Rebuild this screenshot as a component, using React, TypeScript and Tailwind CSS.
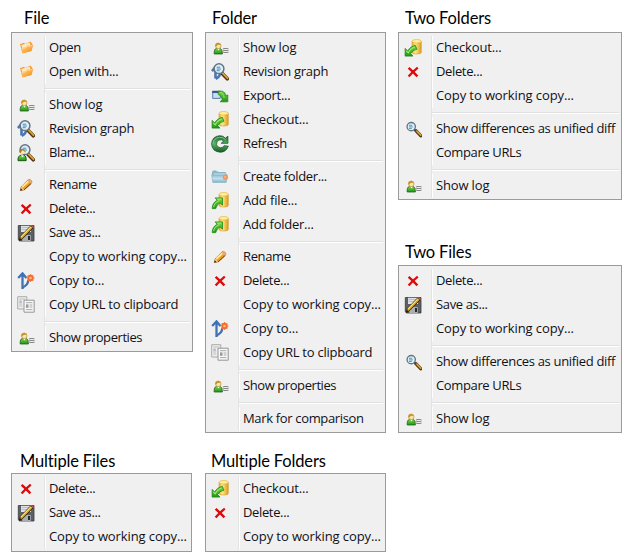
import React from "react";

type IconName =
  | "open" | "user" | "graph" | "blame" | "rename" | "delete" | "save" | "copy"
  | "clipboard" | "export" | "checkout" | "refresh" | "create" | "add" | "diff";

type Item = { label: string; icon?: IconName; spacing?: string };
type Entry = Item | { gap: 8 | 9 };

function Gradients() {
  return (
    <svg width="0" height="0" className="absolute" aria-hidden="true">
      <defs>
        <linearGradient id="orange" x1="0" y1="0" x2="1" y2="1">
          <stop offset="0" stopColor="#ffd68f" /><stop offset="0.5" stopColor="#fcae45" /><stop offset="1" stopColor="#ee861a" />
        </linearGradient>
        <linearGradient id="gold" x1="0" y1="0" x2="1" y2="0">
          <stop offset="0" stopColor="#e3a62a" /><stop offset="0.35" stopColor="#ffec86" /><stop offset="1" stopColor="#dc9a1c" />
        </linearGradient>
        <linearGradient id="green" x1="0" y1="0" x2="0" y2="1">
          <stop offset="0" stopColor="#7ad650" /><stop offset="1" stopColor="#1f9416" />
        </linearGradient>
        <linearGradient id="dark" x1="0" y1="0" x2="0" y2="1">
          <stop offset="0" stopColor="#1f6b32" /><stop offset="0.5" stopColor="#5bb265" /><stop offset="1" stopColor="#145a22" />
        </linearGradient>
        <linearGradient id="sky" x1="0" y1="0" x2="0" y2="1">
          <stop offset="0" stopColor="#8dbdd3" /><stop offset="0.5" stopColor="#c3dfeb" /><stop offset="1" stopColor="#82b4cc" />
        </linearGradient>
      </defs>
    </svg>
  );
}

function Lens({ small = false }: { small?: boolean }) {
  return (
    <g transform={small ? "translate(2 1.5) scale(.9)" : ""}>
      <path d="M11 10.2 L16.3 15.8" stroke="#4d3212" strokeWidth="3.6" strokeLinecap="round" />
      <path d="M11.8 10.4 L16.4 15.2" stroke="#dda034" strokeWidth="1.9" strokeLinecap="round" />
      <circle cx={small ? 5.8 : 8} cy="5.7" r={small ? 4.6 : 4.9} fill="#dff0f9" stroke="#66747e" strokeWidth="1.5" />
      {small && <path d="M9 9 L11.5 11" stroke="#444b50" strokeWidth="1.8" />}
      <path d="M4.8 4.2h3.5M4.8 6h4.2M4.8 7.7h3" transform={small ? "translate(-1.4 0)" : "translate(.9 0)"} stroke="#438bb8" strokeWidth="1" />
    </g>
  );
}

function Cylinder() {
  return (
    <g>
      <path d="M8 2.3v11.2c0 2 9.3 2 9.3 0v-11.2" fill="url(#gold)" stroke="#d99b31" strokeWidth=".6" />
      <ellipse cx="12.65" cy="2.3" rx="4.6" ry="1.8" fill="#fff09a" stroke="#e0aa32" strokeWidth=".6" />
    </g>
  );
}

function Icon({ name }: { name: IconName }) {
  const art: Record<IconName, React.ReactNode> = {
    open: (
      <g>
        <path d="M3 5 L7 3.8 L8.2 5 L13.5 2.4 L15.6 5.3 L14.4 12 L5.3 14 Z" fill="#f6a03a" />
        <path d="M4.4 6 L12.7 3.8 L13.5 7 L5.3 9.2 Z" fill="#ffeac4" />
        <path d="M4.3 9.1 L8.5 8.2 L10 6.6 L16.3 6 L14.5 12 L5.6 14.4 Z" fill="url(#orange)" />
        <path d="M4.9 9.5L8.8 8.7L10.3 7.2L15.6 6.7" fill="none" stroke="#ffe3b0" strokeWidth=".7" />
      </g>
    ),
    user: (
      <g>
        <path d="M3.2 15 Q2.8 10 5.6 9.3 L9.2 9.3 Q11.6 10.4 11.4 15 Z" fill="url(#green)" stroke="#25601a" strokeWidth=".8" />
        <path d="M6 9.3 L8.8 9.3 L7.6 11.4Z" fill="#fff" />
        <circle cx="7.3" cy="6.9" r="2.7" fill="#ffe5a4" stroke="#c08c30" strokeWidth=".7" />
        <path d="M4.2 7.4 Q3.9 3.7 7.3 3.8 Q9.7 3.9 10.1 6.2 Q7.4 5 5.4 7.2Z" fill="#c8952f" />
        <path d="M12 9.5h5.2M12 11.5h5.2M12 13.5h5.2" stroke="#858585" strokeWidth="1.1" />
        <path d="M12.3 9v5M17 9v5" stroke="#b5b5b5" strokeWidth=".8" />
      </g>
    ),
    graph: (
      <g>
        <path d="M4.5 15.5V4.5M1 8.2L4.5 4L7 8M4.7 15.8Q9.3 13.5 9.6 9" stroke="#4876b4" strokeWidth="2.6" fill="none" />
        <Lens />
      </g>
    ),
    blame: (
      <g>
        <Lens />
        <path d="M1 16.7Q.6 11.7 4 11.2H7.3Q9.6 12.2 9.2 16.7Z" fill="url(#green)" stroke="#174c13" strokeWidth=".9" />
        <path d="M3.8 11.2h3L5.8 13.5Z" fill="#fff" />
        <circle cx="5.2" cy="8.2" r="2.4" fill="#ffe4a2" />
        <path d="M2.3 8.2Q2.3 4.4 5.5 4.9Q7.8 5.2 8 7.3L5.2 6.3L3.4 9.2Z" fill="#a77726" />
      </g>
    ),
    rename: (
      <g>
        <path d="M3.3 14.5L4.2 10.7L11 3.9Q12.9 2.9 14.7 5Q15.2 6.6 13.8 7.9L7.2 13.9Z" fill="#ea9b22" stroke="#a0601c" strokeWidth=".7" />
        <path d="M5.2 10.9L11.7 4.9" stroke="#ffe695" strokeWidth="2" />
        <path d="M11 3.9Q12.9 2.9 14.7 5Q15.2 6.6 13.8 7.9L10.8 4.9Z" fill="#eea878" />
        <path d="M3.3 14.5L4.2 10.9L7 13.8Z" fill="#f7dcae" />
        <path d="M3.1 14.7L3.8 12.2L5.7 14Z" fill="#292522" />
        <path d="M7 13.9L13.9 7.7" stroke="#64421a" strokeWidth=".9" />
      </g>
    ),
    delete: (
      <g fill="none" stroke="#dc0c0c">
        <path d="M4.6 4.9Q8.6 8.4 13.4 13.3" strokeWidth="2.5" />
        <path d="M13.8 4.6Q9 8.4 4.6 13.5" strokeWidth="2.3" />
      </g>
    ),
    save: (
      <g>
        <path d="M1.3 1.5H17V17H2.7L1.3 15.7Z" fill="#5c6066" stroke="#373a3e" strokeWidth=".8" />
        <path d="M4 1.8H14V8H4Z" fill="#dfe2e4" />
        <path d="M4.5 3.5H13M4.5 5.5H12" stroke="#aeb4ba" strokeWidth=".7" />
        <path d="M5.2 11H13.8V17H5.2Z" fill="#a9aeb3" />
        <path d="M11 12H13V16H11Z" fill="#272a2e" />
        <path d="M2.2 16.6L3.1 12.8L13.8 1.8L16 3.9L5.4 14.8Z" fill="#cc9a20" stroke="#392e18" strokeWidth="1" />
        <path d="M4 13L14 2.9" stroke="#ffe471" strokeWidth="1.2" />
        <path d="M13.8 1.8L14.6 .9L17 3.1L16 3.9Z" fill="#d95641" />
        <path d="M2.2 16.6L2.8 14L4.7 15.5Z" fill="#201b13" />
      </g>
    ),
    copy: (
      <g fill="none">
        <path d="M5.5 17V2M1.2 6L5.5 1.4L9.4 6" stroke="#3f73b5" strokeWidth="2.3" />
        <path d="M5.6 15.5Q11.2 12.8 11.3 8" stroke="#3f73b5" strokeWidth="2.3" />
        <circle cx="13.5" cy="6" r="2.3" fill="#ffc271" stroke="#f46c33" strokeWidth="2" />
        <path d="M13.5 2v1M13.5 9v1M9.4 6h1M16.6 6h1M10.8 3.2l.8.8M15.5 8l.8.8M16.2 3.2l-.8.8M10.7 8.8l.8-.8" stroke="#f57c49" strokeWidth="1.1" />
      </g>
    ),
    clipboard: (
      <g>
        <path d="M.7.7H9.8V13H.7Z" fill="#eee" stroke="#aaa" />
        <path d="M2.2 3h6M2.2 8h3M2.2 10h3" stroke="#b8b8b8" strokeWidth=".9" />
        <path d="M2.3 4.5H4.8V7H2.3Z" fill="#bbb" />
        <path d="M7 4.2H17.2V16.2H7Z" fill="#f7f7f7" stroke="#969696" />
        <path d="M9 6.7H15.4M12.6 9H15.4M12.6 11H15.4M9 13.6H15.4" stroke="#aaa" />
        <path d="M9 8.4H11.5V11.8H9Z" fill="#999" />
      </g>
    ),
    export: (
      <g>
        <path d="M1.7 4.3H9.3V11.4H1.7Z" fill="#c9ddeb" stroke="#5b7fa8" />
        <path d="M1.3 3.9H9.7V6H1.3Z" fill="#335797" />
        <path d="M7.2 4.2H11.2Q14.6 5.2 14.6 8.6L16.8 8V14.8H9.2L11.2 12.6Q11 8.3 7.2 7.4Z" fill="url(#green)" stroke="#26851a" strokeWidth=".8" />
        <path d="M9 5.4Q12.6 6 13.2 11" fill="none" stroke="#9be565" strokeWidth=".9" />
      </g>
    ),
    checkout: (
      <g>
        <Cylinder />
        <path d="M1.1 9.4V17.1H8.9L6.7 14.5Q8.5 11 12.9 10.3L11.3 6.2Q6 7.6 3.6 11.8Z" fill="url(#green)" stroke="#218a18" strokeWidth=".8" />
        <path d="M2.3 12L4.3 13.9Q6 9.8 10.7 8" stroke="#9aec6c" strokeWidth="1.1" fill="none" />
      </g>
    ),
    refresh: (
      <g>
        <path d="M16.9 1.2V8.3H10.2L12.7 6.1Q10.6 3.9 7.9 5.1Q5.2 6.4 5.5 9.5Q6.2 12.7 9.6 12.8Q12 12.8 13.1 10.7L17.3 11.2Q15.2 17.2 9.2 17.2Q1 16.6 .6 9Q1 1.3 8.8 .7Q12.3 .6 14.4 3.2Z" fill="url(#dark)" stroke="#1b5b2b" strokeWidth=".8" />
        <path d="M2.1 8.5Q2.5 3 8.6 2.3Q12 2 14.5 4.5" stroke="#8bcb8b" strokeWidth=".9" fill="none" />
      </g>
    ),
    create: (
      <g>
        <path d="M1 4L2 2.4H6.2L7.3 4H14.8V7H1Z" fill="#89b6cb" />
        <path d="M2.4 5.2H15V13.6H2.4Z" fill="#e1eef4" stroke="#8cb6cb" strokeWidth=".7" />
        <path d="M.7 6.8H16.2L15.2 14.4H1.8Z" fill="url(#sky)" stroke="#80adc2" strokeWidth=".6" />
        <path d="M5 2.8h4" stroke="#e4f2f8" strokeWidth="1" />
        <circle cx="14.4" cy="9.2" r="2.6" fill="#ed955f" />
        <circle cx="14.2" cy="9" r="1" fill="#ffba89" />
      </g>
    ),
    add: (
      <g>
        <Cylinder />
        <path d="M1.2 16.6Q1.2 10.5 6.3 8.3L4.1 5.9H11.5V13.2L9.1 10.9Q5.7 12.2 4.8 16.6Z" fill="url(#green)" stroke="#218a18" strokeWidth=".8" />
        <path d="M2.6 15.2Q3.2 10.7 8.2 8.7L6.6 7.1H10.2" stroke="#9aec6c" strokeWidth="1" fill="none" />
      </g>
    ),
    diff: <Lens small />,
  };
  return <svg viewBox="0 0 18 18" className="h-[18px] w-[18px] shrink-0">{art[name]}</svg>;
}

function Menu({ title, titleClass, boxClass, entries }: { title: string; titleClass: string; boxClass: string; entries: Entry[] }) {
  return (
    <section>
      <h2 className={`h-8 font-['Lato'] text-[16.5px] leading-[22px] font-normal tracking-[-0.15px] whitespace-nowrap text-black ${titleClass}`}>{title}</h2>
      <div className={`border border-[#9b9b9b] bg-[#f0f0f0] pt-[3px] ${boxClass}`}>
        {entries.map((entry, i) =>
          "gap" in entry ? (
            <div key={i} className={`flex ${entry.gap === 9 ? "h-[9px]" : "h-2"}`}>
              <div className="w-[33px] shrink-0 border-r border-[#e2e3e3]" />
              <div className="mt-1 mr-[2px] h-[2px] grow border-t border-b border-t-[#e0e0e0] border-b-white bg-white" />
            </div>
          ) : (
            <div key={i} className="flex h-6">
              <div className="flex w-[33px] shrink-0 items-center border-r border-[#e2e3e3] pl-[5px]">
                {entry.icon && <Icon name={entry.icon} />}
              </div>
              <span className={`border-l border-white pl-[3px] font-['Open_Sans'] text-[13px] leading-[23px] whitespace-nowrap text-[#101018] ${entry.spacing ?? "tracking-[-0.36px]"}`}>{entry.label}</span>
            </div>
          ),
        )}
      </div>
    </section>
  );
}

const copyWorking: Entry = { label: "Copy to working copy...", spacing: "tracking-[-0.1px]" };
const remove: Entry = { label: "Delete...", icon: "delete", spacing: "tracking-[-0.36px]" };
const saveAs: Entry = { label: "Save as...", icon: "save", spacing: "tracking-[-0.36px]" };
const checkout: Entry = { label: "Checkout...", icon: "checkout", spacing: "tracking-[-0.15px]" };
const showLog: Entry = { label: "Show log", icon: "user", spacing: "tracking-[-0.15px]" };
const graph: Entry = { label: "Revision graph", icon: "graph", spacing: "tracking-[-0.3px]" };
const rename: Entry = { label: "Rename", icon: "rename" };
const copyTail: Entry[] = [
  copyWorking,
  { label: "Copy to...", icon: "copy", spacing: "tracking-[-0.12px]" },
  { label: "Copy URL to clipboard", icon: "clipboard", spacing: "tracking-[-0.24px]" },
  { gap: 9 },
  { label: "Show properties", icon: "user", spacing: "tracking-[-0.42px]" },
];
const compare: Entry[] = [
  { gap: 9 },
  { label: "Show differences as unified diff", icon: "diff", spacing: "tracking-[-0.33px]" },
  { label: "Compare URLs" },
  { gap: 9 },
  showLog,
];

export default function App() {
  return (
    <main className="flex h-[559px] w-[632px] overflow-hidden bg-white pl-[11px]">
      <Gradients />
      <div className="flex h-[552px] w-[194px] shrink-0 flex-col justify-between">
        <Menu title="File" titleClass="pt-[7px] pl-[13px]" boxClass="w-[182px] pb-px" entries={[
          { label: "Open", icon: "open" }, { label: "Open with...", icon: "open", spacing: "tracking-[-0.3px]" }, { gap: 9 },
          showLog, graph, { label: "Blame...", icon: "blame", spacing: "tracking-[-0.36px]" }, { gap: 8 },
          rename, remove, saveAs, ...copyTail,
        ]} />
        <Menu title="Multiple Files" titleClass="pt-[9px] pl-[9px]" boxClass="w-[181px] pb-[2px]" entries={[remove, saveAs, copyWorking]} />
      </div>
      <div className="flex h-[552px] w-[193px] shrink-0 flex-col justify-between">
        <Menu title="Folder" titleClass="pt-[7px] pl-[7px]" boxClass="w-[181px] pb-px" entries={[
          showLog, graph, { label: "Export...", icon: "export", spacing: "tracking-[-0.3px]" }, checkout, { label: "Refresh", icon: "refresh" }, { gap: 9 },
          { label: "Create folder...", icon: "create" }, { label: "Add file...", icon: "add", spacing: "tracking-[-0.15px]" }, { label: "Add folder...", icon: "add", spacing: "tracking-[-0.25px]" }, { gap: 8 },
          rename, remove, ...copyTail, { gap: 9 }, { label: "Mark for comparison", spacing: "tracking-[-0.34px]" },
        ]} />
        <Menu title="Multiple Folders" titleClass="pt-[9px] pl-[6px]" boxClass="w-[181px] pb-[2px]" entries={[checkout, remove, copyWorking]} />
      </div>
      <div className="flex h-[433px] w-[224px] shrink-0 flex-col justify-between">
        <Menu title="Two Folders" titleClass="pt-[7px] pl-[7px]" boxClass="w-[224px] pb-px" entries={[checkout, remove, copyWorking, ...compare]} />
        <Menu title="Two Files" titleClass="pt-2 pl-[7px]" boxClass="w-[224px] pb-px" entries={[remove, saveAs, copyWorking, ...compare]} />
      </div>
    </main>
  );
}
